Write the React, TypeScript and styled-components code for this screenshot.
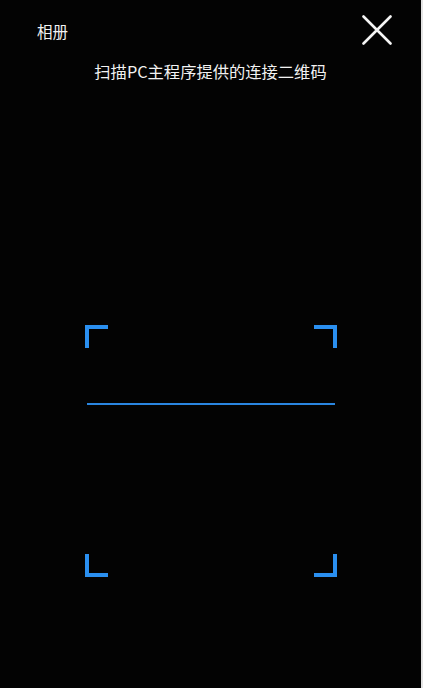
import React from "react";
import styled, { createGlobalStyle } from "styled-components";

const Global = createGlobalStyle`
  html, body { margin: 0; padding: 0; background: #e4e4e4; }
  body { font-family: "Noto Sans CJK SC", "Noto Sans", sans-serif; }
`;

const Screen = styled.div`
  width: 421px;
  height: 688px;
  background: #030303;
  display: flex;
  flex-direction: column;
  align-items: stretch;
  box-sizing: border-box;
`;

const TopBar = styled.div`
  display: flex;
  align-items: center;
  justify-content: space-between;
  height: 29px;
  padding: 15px 29px 0 37px;
`;

const AlbumLabel = styled.span`
  color: #f2f2f2;
  font-size: 15.5px;
  line-height: 29px;
  padding-top: 3px;
`;

const CloseButton = styled.button`
  width: 30px;
  height: 30px;
  padding: 0;
  border: none;
  background: transparent;
  display: flex;
  align-items: center;
  justify-content: center;
`;

const Title = styled.div`
  margin-top: 17px;
  text-align: center;
  color: #f2f2f2;
  font-size: 16.3px;
  line-height: 20px;
`;

const ScanBox = styled.div`
  position: relative;
  width: 252px;
  height: 252px;
  margin: 244px auto 0;
`;

type CornerProps = { $v: "top" | "bottom"; $h: "left" | "right" };

const Corner = styled.span<CornerProps>`
  position: absolute;
  width: 23px;
  height: 23px;
  ${(p) => p.$v}: 0;
  ${(p) => p.$h}: 0;
  border-color: #2a8ff0;
  border-style: solid;
  border-width: 0;
  border-${(p) => p.$v}-width: 4px;
  border-${(p) => p.$h}-width: 4px;
  box-sizing: border-box;
`;

const ScanLine = styled.span`
  position: absolute;
  left: 2px;
  right: 2px;
  top: 78px;
  height: 2px;
  background: #2a86e0;
`;

export default function App() {
  return (
    <>
      <Global />
      <Screen>
        <TopBar>
          <AlbumLabel>相册</AlbumLabel>
          <CloseButton aria-label="关闭">
            <svg width="30" height="30" viewBox="0 0 30 30">
              <path d="M1.5 1.5 L28.5 28.5 M28.5 1.5 L1.5 28.5" stroke="#f5f5f5" strokeWidth="2.6" strokeLinecap="round" />
            </svg>
          </CloseButton>
        </TopBar>
        <Title>扫描PC主程序提供的连接二维码</Title>
        <ScanBox>
          <Corner $v="top" $h="left" />
          <Corner $v="top" $h="right" />
          <Corner $v="bottom" $h="left" />
          <Corner $v="bottom" $h="right" />
          <ScanLine />
        </ScanBox>
      </Screen>
    </>
  );
}
